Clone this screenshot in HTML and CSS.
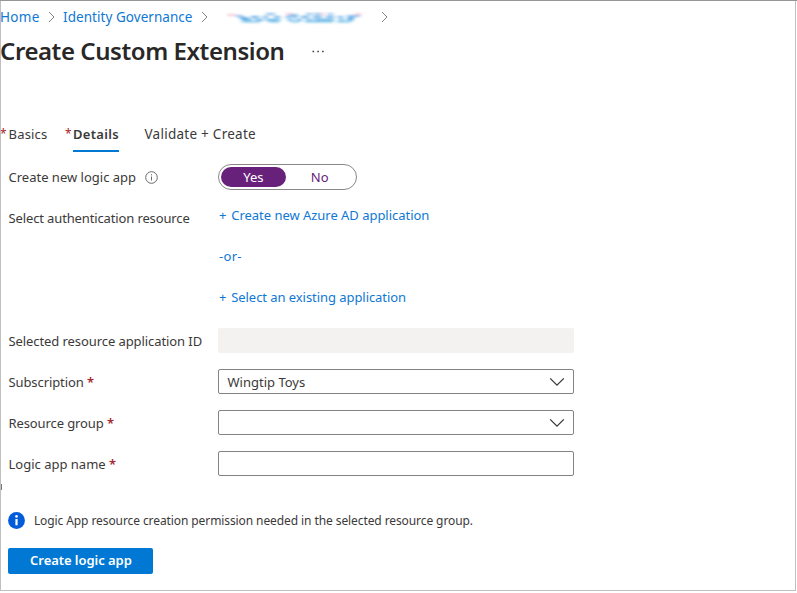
FILE: index.html
```html
<!DOCTYPE html>
<html lang="en">
<head>
<meta charset="utf-8">
<title>Create Custom Extension</title>
<link rel="stylesheet" href="styles.css">
</head>
<body>
<main class="blade">
  <nav class="crumbs">
    <a class="home">Home</a>
    <svg class="sep" width="7" height="12" viewBox="0 0 7 12"><path d="M1 1l5 5-5 5"/></svg>
    <a class="governance">Identity Governance</a>
    <svg class="sep" width="7" height="12" viewBox="0 0 7 12"><path d="M1 1l5 5-5 5"/></svg>
    <svg class="redacted" width="140" height="16" viewBox="0 0 140 16">
      <defs><filter id="soft" x="-5%" y="-30%" width="110%" height="160%"><feGaussianBlur stdDeviation="1.9 .8"/></filter></defs>
      <g filter="url(#soft)" fill="none" stroke-width="2.2">
        <path stroke="#f6cbd8" d="M1 6h9M60 5h7M94 5h5M129 5h6"/>
        <path stroke="#88bdec" d="M10 7h7M40 5h9M63 6h9M80 5h6M88 5h7M102 5h5M121 7h13"/>
        <path stroke="#5aa9e4" d="M14 9h8M25 8h8M37 8h5M48 8h6M60 8h5M67 8h4M75 8h8M87 8h9M100 8h8M112 8h5M122 9h6"/>
        <path stroke="#5aafe8" d="M16 11h10M29 11h8M40 11h14M62 11h5M70 11h6M80 11h6M88 11h20M113 11h5M121 11h6"/>
        <path stroke="#a4d8ef" d="M16 13h18M43 13h10M65 13h8M79 13h28M111 13h14"/>
      </g>
    </svg>
    <svg class="sep" width="7" height="12" viewBox="0 0 7 12"><path d="M1 1l5 5-5 5"/></svg>
  </nav>

  <header class="heading">
    <h1>Create Custom Extension</h1>
    <svg class="more" width="13" height="3" viewBox="0 0 13 3"><path d="M.5.7h1.6v1.6H.5zM5.3.7h1.6v1.6H5.3zM10.1.7h1.6v1.6h-1.6z"/></svg>
  </header>

  <div class="tabs">
    <div class="tab basics"><span class="star">*</span><span class="tab-text">Basics</span></div>
    <div class="tab details"><span class="star">*</span><span class="tab-text">Details</span></div>
    <div class="tab validate"><span class="tab-text">Validate + Create</span></div>
  </div>

  <form class="form">
    <div class="row">
      <label class="l-new">Create new logic app</label>
      <svg class="info" width="13" height="13" viewBox="0 0 13 13"><circle cx="6.5" cy="6.5" r="5.8"/><path d="M6.5 5.5v4M6.5 3.2v1.2"/></svg>
      <div class="toggle"><span class="on">Yes</span><span class="off">No</span></div>
    </div>
    <div class="row auth">
      <label class="l-auth">Select authentication resource</label>
      <div class="links">
        <a class="k-create"><span class="plus">+</span> Create new Azure AD application</a>
        <a class="k-or">-or-</a>
        <a class="k-select"><span class="plus">+</span> Select an existing application</a>
      </div>
    </div>
    <div class="row"><label class="l-id">Selected resource application ID</label><div class="field disabled"></div></div>
    <div class="row"><label class="l-sub">Subscription <b>*</b></label>
      <div class="field"><span class="value">Wingtip Toys</span><svg class="chev" width="16" height="10" viewBox="0 0 16 10"><path d="M1.2 1.4L8 8.2l6.8-6.8"/></svg></div></div>
    <div class="row"><label class="l-group">Resource group <b>*</b></label>
      <div class="field"><svg class="chev" width="16" height="10" viewBox="0 0 16 10"><path d="M1.2 1.4L8 8.2l6.8-6.8"/></svg></div></div>
    <div class="row"><label class="l-name">Logic app name <b>*</b></label><div class="field"></div></div>
  </form>

  <div class="sliver"></div>
  <div class="notice">
    <svg width="17" height="17" viewBox="0 0 17 17"><circle cx="8.5" cy="8.5" r="8.4" fill="#015cda"/><circle cx="8.5" cy="4.4" r="1.3" fill="#fff"/><path d="M7.4 7h2.2v6.3H7.4z" fill="#fff"/></svg>
    <span>Logic App resource creation permission needed in the selected resource group.</span>
  </div>
  <div class="submit"><span>Create logic app</span></div>
</main>
</body>
</html>
```
FILE: styles.css
```css
* { box-sizing: border-box; }
body {
  margin: 0;
  background: #fff;
  border-top: 1px solid #969696;
  font: 13px/20px "Noto Sans", "Open Sans", sans-serif;
  color: #3b3a39;
  white-space: nowrap;
}
.blade {
  width: 796px;
  height: 590px;
  border: solid #c0c0c0;
  border-width: 0 1px 1px;
  overflow: hidden;
}
a { color: #0f78d4; }
.crumbs { display: flex; align-items: center; height: 32px; font-size: 13.5px; }
.home { width: 40px; margin-left: -1px; letter-spacing: .3px; }
.governance { width: 130px; letter-spacing: .05px; }
.sep { fill: none; stroke: #85817e; stroke-width: 1; margin: 0 8px; flex: none; }
.redacted { margin: 0 7px 0 10px; }
.heading { display: flex; align-items: center; height: 36px; }
h1 { margin: 0 0 0 -1px; width: 285px; font-size: 24px; line-height: 36px; font-weight: 600; letter-spacing: -.43px; color: #292827; }
.more { margin-left: 27px; fill: #444; }

.tabs { display: flex; height: 31px; margin-top: 52px; }
.tab { display: flex; }
.tab-text { height: 31px; line-height: 27px; }
.star { color: #a4262c; font-size: 12px; line-height: 25px; }
.basics .star { width: 8.5px; margin-left: -1px; }
.basics { width: 64px; letter-spacing: .2px; }
.details .star { width: 8px; }
.details .tab-text { width: 46px; font-weight: 600; letter-spacing: .3px; border-bottom: 2px solid #0078d4; }
.validate { margin-left: 25.5px; font-size: 13.5px; letter-spacing: .26px; }

.form { display: grid; row-gap: 16px; margin: 12px 0 0 7.5px; }
.row { display: flex; align-items: center; height: 25px; }
label { width: 209.5px; }
label b { color: #a4262c; font-weight: 600; }
.l-new { width: 136px; }
.l-auth { letter-spacing: -.13px; }
.l-id { letter-spacing: -.08px; }
.l-sub { letter-spacing: -.1px; }
.l-group { letter-spacing: -.1px; }
.info { fill: none; stroke: #6b6967; stroke-width: 1; margin: 2px 60.5px 0 0; }
.toggle { display: flex; width: 138.5px; height: 26px; padding: 2px; border: 1px solid #8a8886; border-radius: 13px; text-align: center; color: #68217a; }
.toggle span { width: 66px; line-height: 20px; border-radius: 10px; }
.toggle .off { width: 69px; }
.toggle .on { background: #68217a; color: #fff; }
.auth { height: 107px; align-items: flex-start; }
.auth label { padding-top: 3px; }
.links { display: grid; row-gap: 21px; }
.plus { margin-right: 1.5px; }
.links a { padding-left: 1px; }
.k-create { letter-spacing: -.03px; }
.k-select { letter-spacing: -.06px; }
.k-or { letter-spacing: .3px; }
.field { display: flex; align-items: center; justify-content: flex-end; width: 355.5px; height: 25px; padding: 0 7.5px 0 8.5px; border: 1px solid #858381; border-radius: 2px; }
.value { margin-right: auto; line-height: 18px; }
.disabled { background: #f3f2f1; border-color: #f3f2f1; }
.chev { fill: none; stroke: #3b3a39; stroke-width: 1.3; }

.sliver { width: 1px; height: 6px; margin-top: 8px; background: #777; }
.notice { display: flex; align-items: center; height: 20px; margin: 20px 0 0 7.4px; font-size: 12px; letter-spacing: -.09px; }
.notice span { margin-left: 8.5px; padding-top: 1px; }
.submit { width: 145px; height: 26px; margin: 18px 0 0 7.4px; background: #0078d4; color: #fff; border-radius: 2px; text-align: center; font-weight: 600; line-height: 25px; letter-spacing: -.05px; }
```
